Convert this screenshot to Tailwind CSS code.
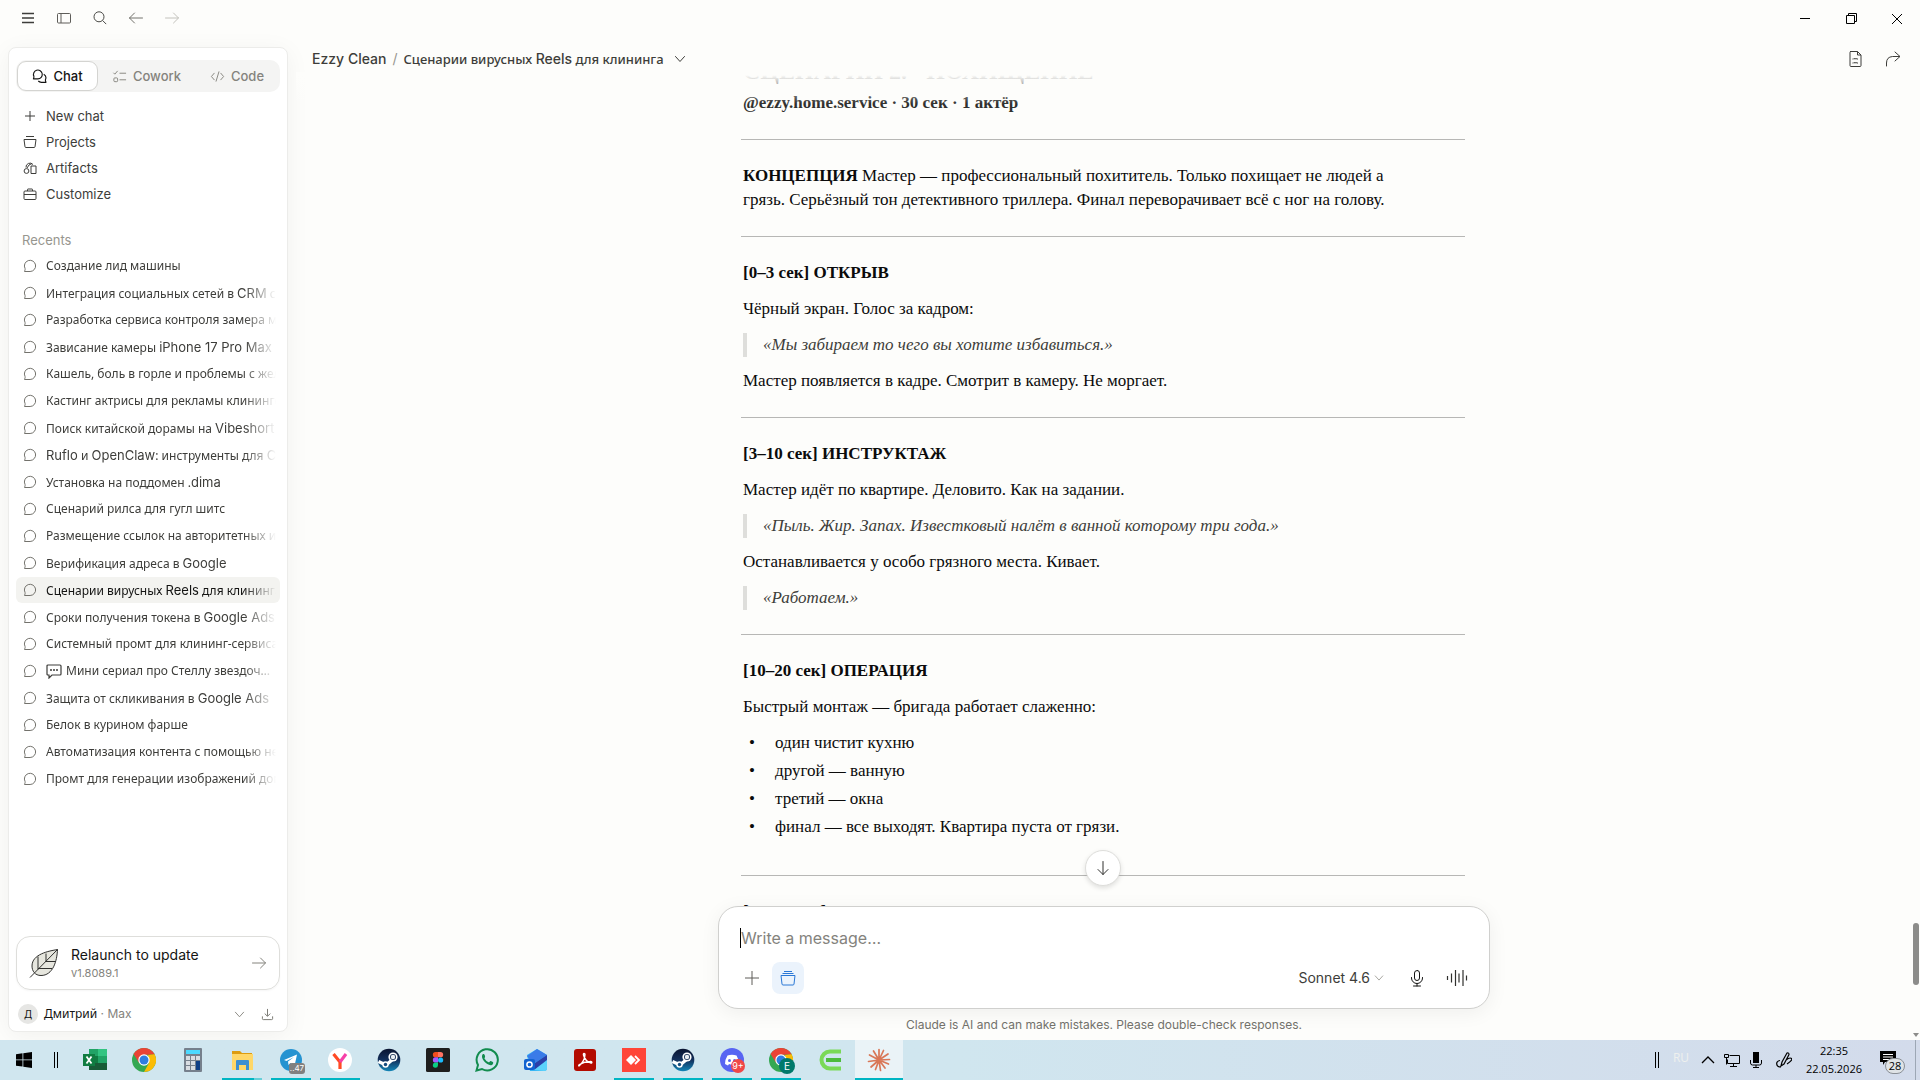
<!DOCTYPE html>
<html lang="ru">
<head>
  <meta charset="UTF-8">
  <meta name="viewport" content="width=device-width, initial-scale=1.0">
  <title>Claude</title>
  <script src="https://cdn.jsdelivr.net/npm/@tailwindcss/browser@4"></script>
</head>
<body class="h-screen flex flex-col overflow-hidden bg-[#fdfdfb] text-[#3d3d3a] font-['Inter','Noto_Sans',sans-serif] text-sm">
  <!-- Shared icons -->
  <svg class="absolute size-0">
    <symbol id="bubble" viewBox="0 0 14 14" fill="none" stroke="currentColor"><path d="M1.5 12.5h5.6A5.6 5.6 0 1 0 2 9.4c.3.7.2 1-.5 3.1z" stroke-linejoin="round"/></symbol>
    <symbol id="chevron" viewBox="0 0 12 12" fill="none" stroke="currentColor"><path d="M1.5 3.5 6 8.5l4.500-5" stroke-linecap="round"/></symbol>
    <symbol id="right" viewBox="0 0 16 16" fill="none" stroke="currentColor" stroke-linecap="round"><path d="M1.500 8h13M9.500 3l5 5-5 5"/></symbol>
    <symbol id="steam" viewBox="0 0 24 24">
      <circle cx="12" cy="12" r="11.300" fill="url(#steamFill)"/>
      <path d="M1.500 13.500 9 17l6-5" fill="none" stroke="#fff" stroke-width="3.200"/>
      <circle cx="8.500" cy="16.500" r="3.200" fill="#fff"/><circle cx="8.500" cy="16.500" r="1.700" fill="#134a7c"/>
      <circle cx="16" cy="9" r="4.600" fill="#fff"/><circle cx="16" cy="9" r="3" fill="#1b3357"/><circle cx="16" cy="9" r="2.200" fill="#e9eef3"/>
    </symbol>
    <symbol id="chrome" viewBox="0 0 24 24">
      <circle cx="12" cy="12" r="12" fill="#34a853"/>
      <path d="M1.600 6A12 12 0 0 1 22.400 6L12 7 7 14.800z" fill="#ea4335"/>
      <path d="M22.400 6A12 12 0 0 1 12 24l5-9-1-8z" fill="#fbbc05"/>
      <path d="M12 6.200h10.400V6L12 5z" fill="#ea4335"/>
      <circle cx="12" cy="12" r="5.700" fill="#fff"/><circle cx="12" cy="12" r="4.500" fill="#2f7de1"/>
    </symbol>
    <linearGradient id="steamFill" x1="0" y1="0" x2="0" y2="1"><stop offset="0" stop-color="#0a1430"/><stop offset="0.500" stop-color="#13305c"/><stop offset="1" stop-color="#1387b8"/></linearGradient>
  </svg>

  <div class="flex-1 min-h-0 flex">
    <!-- Left column -->
    <div class="w-[296px] shrink-0 flex flex-col pl-2 pr-2 pb-2">
      <div class="h-[47px] shrink-0 flex items-start pt-[10px] pl-3 gap-5">
        <button aria-label="Menu"><svg class="size-4" viewBox="0 0 16 16" fill="none" stroke="#3d3d3a" stroke-width="1.500"><path d="M2 3.500h12M2 8h12M2 12.500h12"/></svg></button>
        <button aria-label="Toggle sidebar"><svg class="size-4" viewBox="0 0 16 16" fill="none" stroke="#5e5d59"><rect x="1.500" y="3.500" width="13" height="9.500" rx="1"/><path d="M5 3.500V13"/></svg></button>
        <button aria-label="Search"><svg class="size-4" viewBox="0 0 16 16" fill="none" stroke="#4a4a46"><circle cx="7" cy="6.800" r="5"/><path d="m10.600 10.500 3.600 3.600"/></svg></button>
        <button aria-label="Back"><svg class="size-4 rotate-180 text-[#73726c]"><use href="#right"/></svg></button>
        <button aria-label="Forward"><svg class="size-4 text-[#c3c2bc]"><use href="#right"/></svg></button>
      </div>

      <aside class="flex-1 min-h-0 flex flex-col rounded-lg border border-[#ececea] bg-white px-[7px] shadow-[0_4px_24px_rgba(0,0,0,0.05)]">
        <!-- Mode tabs -->
        <div class="mt-3 h-8 shrink-0 flex items-center rounded-[10px] bg-[#f4f4f3] p-px text-[13px] font-medium text-[#84837d]">
          <button class="h-[30px] w-[81px] flex items-center justify-center gap-[6px] rounded-[9px] border border-[#d4d4d1] bg-white text-[#141413]">
            <svg class="size-[15px]" viewBox="0 0 16 16" fill="none" stroke="currentColor" stroke-width="1.200" stroke-linejoin="round"><path d="M1.500 10.500h4.800A4.700 4.700 0 1 0 2 7.800c.3.800.2 1-.5 2.700z"/><path d="M12.500 5.600a4.500 4.500 0 0 1 1.800 5.800c-.2.600 0 1.200.6 2.800H10a4.500 4.500 0 0 1-3.300-1.400"/></svg>
            Chat
          </button>
          <button class="flex-1 flex items-center justify-center gap-[6px]">
            <svg class="size-[15px]" viewBox="0 0 16 16" fill="none" stroke="currentColor"><path d="m1.500 4 1.500 1.500 3-3.500M8 4.500h7M8 11.500h7"/><rect x="2" y="9.500" width="4" height="4" rx="1"/></svg>
            Cowork
          </button>
          <button class="w-[84px] flex items-center justify-center gap-[6px]">
            <svg class="size-[15px]" viewBox="0 0 16 16" fill="none" stroke="currentColor" stroke-linecap="round"><path d="M4.500 4.500 1.500 8l3 3.500M11.500 4.500l3 3.500-3 3.500M9.500 3l-3 10"/></svg>
            Code
          </button>
        </div>

        <!-- Navigation -->
        <nav class="mt-[11px] flex flex-col text-[13px]">
          <a href="#" class="h-[26px] flex items-center gap-[9px] px-[7px]"><svg class="size-[14px]" viewBox="0 0 14 14" fill="none" stroke="currentColor"><path d="M7 2v10M2 7h10"/></svg>New chat</a>
          <a href="#" class="h-[26px] flex items-center gap-[9px] px-[7px]"><svg class="size-[14px]" viewBox="0 0 14 14" fill="none" stroke="currentColor"><path d="M3 1.500h8M1 4.500h12l-1 7.300q-.1.700-1 .7H3q-.900 0-1-.700z" stroke-linejoin="round"/></svg>Projects</a>
          <a href="#" class="h-[26px] flex items-center gap-[9px] px-[7px]"><svg class="size-[14px]" viewBox="0 0 14 14" fill="none" stroke="currentColor"><path d="M3 6.500a4 4 0 0 1 7-3M8 5h5v7.500H8zM4 7 6 4l3-1.500"/><circle cx="3.500" cy="10" r="2.400"/></svg>Artifacts</a>
          <a href="#" class="h-[26px] flex items-center gap-[9px] px-[7px]"><svg class="size-[14px]" viewBox="0 0 14 14" fill="none" stroke="currentColor"><rect x="1" y="4" width="12" height="8.500" rx="1"/><path d="M4.500 4V2.500q0-.5.5-.5h4q.5 0 .5.500V4M1 7.500h12"/></svg>Customize</a>
        </nav>

        <h2 class="mt-[23px] h-[20px] flex items-center px-[6px] text-[13px] text-[#97968f]">Recents</h2>
        <ul id="recents" class="mt-[3px] flex flex-col gap-px text-xs font-['Noto_Sans',sans-serif]"></ul>

        <!-- Update card -->
        <button class="mt-auto h-[54px] shrink-0 flex items-center rounded-[14px] border border-[#dededb] px-3 text-left shadow-[0_1px_2px_rgba(0,0,0,0.04)]">
          <svg class="size-[30px]" viewBox="0 0 30 30" fill="none" stroke="#30302e" stroke-linejoin="round"><path d="M28.500 1.500C20 3 3 6 3 18c0 5 3 9.500 9 9.500C24 27.500 28 13 28.500 1.500z" fill="#e6e6de"/><path d="M1 29.500 28.500 1.500M9 21.500V8.500M9 20.500h14M17 13.500V5.500M16.500 13.500h10"/></svg>
          <span class="ml-3 flex-1">
            <span class="block text-sm text-[#141413]">Relaunch to update</span>
            <span class="block text-[11px] leading-4 text-[#84837d]">v1.8089.1</span>
          </span>
          <svg class="size-4 text-[#84837d]"><use href="#right"/></svg>
        </button>

        <!-- Account -->
        <div class="h-[34px] mt-[7px] shrink-0 flex items-center px-[2px]">
          <span class="size-5 flex items-center justify-center rounded-full bg-[#e6e6e4] text-[10px] text-[#141413]">Д</span>
          <span class="ml-[6px] flex-1 text-xs text-[#84837d]"><span class="text-[#141413] font-['Noto_Sans',sans-serif]">Дмитрий</span> · Max</span>
          <button aria-label="Account menu" class="mr-4"><svg class="block size-[11px] text-[#84837d]"><use href="#chevron"/></svg></button>
          <button aria-label="Downloads" class="mr-1"><svg class="block size-[13px]" viewBox="0 0 14 14" fill="none" stroke="#73726c"><path d="M7 1v7.500M4 6l3 3 3-3M1.500 9v2.500q0 1 1 1h9q1 0 1-1V9"/></svg></button>
        </div>
      </aside>
    </div>

    <!-- Conversation -->
    <main class="flex-1 min-w-0 flex flex-col">
      <div class="h-[37px] shrink-0 -mr-2 flex justify-end">
        <button aria-label="Minimize" class="w-[46px] flex items-center justify-center"><svg class="size-[10px]" viewBox="0 0 10 10" stroke="#000"><path d="M0 4.500h10"/></svg></button>
        <button aria-label="Restore" class="w-[46px] flex items-center justify-center"><svg class="size-[11px]" viewBox="0 0 11 11" fill="none" stroke="#000"><path d="M.500 2.500h8v8h-8zM2.500 2.500v-2h8v8h-2"/></svg></button>
        <button aria-label="Close" class="w-[46px] flex items-center justify-center"><svg class="size-[10px]" viewBox="0 0 10 10" stroke="#000"><path d="m0 0 10 10M10 0 0 10"/></svg></button>
      </div>
      <header class="h-[35px] shrink-0 -mr-2 flex items-start pl-4 pr-[18px]">
        <h1 class="flex-1 flex items-center h-[44px] text-sm font-medium"><a href="#">Ezzy Clean</a><span class="mx-[6px] font-normal text-[#97968f]">/</span><button class="flex items-center gap-[10px] text-[13px] font-['Noto_Sans',sans-serif]"><span>Сценарии вирусных <span class="text-sm font-['Inter',sans-serif]">Reels</span> для клининга</span><svg class="size-3"><use href="#chevron"/></svg></button></h1>
        <button aria-label="Open document" class="h-[44px] mr-5 flex items-center"><svg class="size-[18px]" viewBox="0 0 18 18" fill="none" stroke="currentColor"><path d="M4 1.500h7.500l3.500 3.500v10.500q0 1-1 1H5q-1 0-1-1v-13q0-1 1-1M11.500 1.500V5H15M6.500 9h1l.500-.500 1 .500 1-.500 1 .500h1M6.500 13h1l.500-.500 1 .500 1-.500 1 .500h1"/></svg></button>
        <button aria-label="Share" class="h-[44px] flex items-center"><svg class="size-[18px]" viewBox="0 0 18 18" fill="none" stroke="currentColor"><path d="M2.500 16v-3q0-6 6-6.500h7M11 2l5 4.500-5 4.500" stroke-linecap="round"/></svg></button>
      </header>

      <div class="relative flex-1 min-h-0 mr-[2px] flex">
        <div class="flex-1 min-w-0 overflow-hidden">
          <article class="-mt-[17px] mx-auto max-w-[724px] flex flex-col font-['Liberation_Serif',serif] text-[17px] leading-6 text-[#0b0b0b]">
            <h2 class="px-[2px] mb-1 text-[24px] leading-8 font-bold">СЦЕНАРИЙ 2. "ПОХИЩЕНИЕ"</h2>
            <p class="px-[2px] font-bold text-[#30302e]">@ezzy.home.service · 30 сек · 1 актёр</p>
            <hr class="my-6 border-[#b7b7b5]">
            <p class="px-[2px]"><strong>КОНЦЕПЦИЯ</strong> Мастер — профессиональный похититель. Только похищает не людей а<br>грязь. Серьёзный тон детективного триллера. Финал переворачивает всё с ног на голову.</p>
            <hr class="my-6 border-[#b7b7b5]">
            <section class="px-[2px] flex flex-col gap-3">
              <h3 class="font-bold">[0–3 сек] ОТКРЫВ</h3>
              <p>Чёрный экран. Голос за кадром:</p>
              <blockquote class="border-l-4 border-[#dededb] pl-4 italic text-[#3d3d3a]">«Мы забираем то чего вы хотите избавиться.»</blockquote>
              <p>Мастер появляется в кадре. Смотрит в камеру. Не моргает.</p>
            </section>
            <hr class="my-6 border-[#b7b7b5]">
            <section class="px-[2px] flex flex-col gap-3">
              <h3 class="font-bold">[3–10 сек] ИНСТРУКТАЖ</h3>
              <p>Мастер идёт по квартире. Деловито. Как на задании.</p>
              <blockquote class="border-l-4 border-[#dededb] pl-4 italic text-[#3d3d3a]">«Пыль. Жир. Запах. Известковый налёт в ванной которому три года.»</blockquote>
              <p>Останавливается у особо грязного места. Кивает.</p>
              <blockquote class="border-l-4 border-[#dededb] pl-4 italic text-[#3d3d3a]">«Работаем.»</blockquote>
            </section>
            <hr class="my-6 border-[#b7b7b5]">
            <section class="px-[2px] pb-3 flex flex-col gap-3">
              <h3 class="font-bold">[10–20 сек] ОПЕРАЦИЯ</h3>
              <p>Быстрый монтаж — бригада работает слаженно:</p>
              <ul class="flex flex-col gap-1">
                <li class="flex before:content-['•'] before:w-8 before:pl-[6px]">один чистит кухню</li>
                <li class="flex before:content-['•'] before:w-8 before:pl-[6px]">другой — ванную</li>
                <li class="flex before:content-['•'] before:w-8 before:pl-[6px]">третий — окна</li>
                <li class="flex before:content-['•'] before:w-8 before:pl-[6px]">финал — все выходят. Квартира пуста от грязи.</li>
              </ul>
            </section>
            <hr class="my-6 border-[#b7b7b5]">
            <h3 class="px-[2px] font-bold">[20–27 сек] ФИНАЛ</h3>
          </article>
        </div>
        <div class="absolute inset-x-0 top-0 h-8 bg-linear-to-b from-[#fdfdfb] from-10% to-[#fdfdfb]/0"></div>
        <button aria-label="Scroll to bottom" class="absolute left-1/2 bottom-5 -translate-x-1/2 size-9 flex items-center justify-center rounded-full border border-[#dededb] bg-white shadow-[0_2px_5px_rgba(0,0,0,0.12)]"><svg class="size-4 rotate-90 text-[#30302e]"><use href="#right"/></svg></button>
      </div>

      <!-- Composer -->
      <form class="relative shrink-0 mx-auto w-full max-w-[772px] rounded-[20px] border border-[#d0d0ce] bg-white pt-[19px] pb-[14px] px-[21px] shadow-[0_4px_20px_rgba(0,0,0,0.06)]">
        <div class="flex items-center">
          <span class="w-px h-5 bg-black"></span>
          <input type="text" aria-label="Message" placeholder="Write a message…" class="flex-1 h-6 text-base outline-none placeholder:text-[#84837d]">
        </div>
        <div class="mt-3 h-8 flex items-center">
          <button type="button" aria-label="Add" class="w-8 flex items-center pl-1"><svg class="size-4" viewBox="0 0 16 16" stroke="#5e5d59"><path d="M8 1v14M1 8h14"/></svg></button>
          <button type="button" aria-label="Project" class="size-8 flex items-center justify-center rounded-lg bg-[#ebf3fc]"><svg class="size-4" viewBox="0 0 16 16" fill="none" stroke="#2a78d6" stroke-linejoin="round"><path d="M4 1.500h8M2.500 3.500h11M1 5.500h14l-1 8.500q-.1 1-1 1H3q-.900 0-1-1z"/></svg></button>
          <button type="button" class="ml-auto flex items-center gap-1 text-sm">Sonnet 4.6<svg class="size-[10px] text-[#97968f]"><use href="#chevron"/></svg></button>
          <button type="button" aria-label="Dictate" class="ml-6"><svg class="block size-[18px]" viewBox="0 0 18 18" fill="none" stroke="#141413" stroke-linecap="round"><rect x="6.500" y="1.500" width="5" height="10" rx="2.500"/><path d="M3.500 8.500v.500a5.500 5.500 0 0 0 11 0v-.500M9 14.500v2.500M5.500 17h7"/></svg></button>
          <button type="button" aria-label="Voice mode" class="ml-5"><svg class="block w-[22px] h-[18px]" viewBox="0 0 22 18" stroke="#30302e" stroke-width="1.200"><path d="M1.500 7v4M5.500 4.500v9M9.500 1v16M13 4.500v9M17 1v16M20.500 6.500v5"/></svg></button>
        </div>
      </form>
      <p class="h-[31px] shrink-0 flex items-center justify-center text-xs text-[#73726c]">Claude is AI and can make mistakes. Please double-check responses.</p>
    </main>

    <!-- Scroll track -->
    <div class="w-2 shrink-0 flex flex-col items-center justify-end pb-[3px]">
      <div class="w-[6px] h-[62px] rounded-full bg-[#8c8c8a] mb-[48px]"></div>
      <svg class="w-[6px] h-1" viewBox="0 0 6 4" fill="#8c8c8a"><path d="M0 0h6L3 4z"/></svg>
    </div>
  </div>

  <!-- Taskbar -->
  <footer class="h-10 shrink-0 flex bg-linear-to-r from-[#d0e6ef] from-50% to-[#d3dbeb] text-black">
    <button aria-label="Start" class="w-12 flex items-center justify-center"><svg class="size-4" viewBox="0 0 16 16"><path d="M0 2.200 6.500 1.300v6.200H0zM7.300 1.200 16 0v7.500H7.300zM0 8.300h6.500v6.300L0 13.700zM7.300 8.300H16V16l-8.700-1.200z"/></svg></button>
    <div class="w-[23px] flex items-center justify-center gap-[2px] pr-2"><span class="w-px h-4 bg-black"></span><span class="w-px h-4 bg-black"></span></div>
    <div class="flex gap-px">
      <button aria-label="Excel" class="w-12 flex items-center justify-center"><svg class="size-6" viewBox="0 0 24 24"><path d="M6 1h9v7H6z" fill="#21a366"/><path d="M15 1h9v7h-9z" fill="#33c481"/><path d="M6 8h9v7H6z" fill="#107c41"/><path d="M15 8h9v7h-9z" fill="#21a366"/><path d="M6 15h18v7H6z" fill="#185c37"/><path d="M0 6h12v12H0z" fill="#107c41"/><path d="m3.500 8.500 5 7M8.500 8.500l-5 7" stroke="#fff" stroke-width="1.800"/></svg></button>
      <button aria-label="Chrome" class="w-12 flex items-center justify-center"><svg class="size-6"><use href="#chrome"/></svg></button>
      <button aria-label="Calculator" class="w-12 flex items-center justify-center"><svg class="size-6" viewBox="0 0 24 24"><rect x="3" width="18" height="24" rx="1" fill="#76808c"/><path d="M5 2h14v4H5z" fill="#4cd9ff"/><path d="M5 8h4v4H5zm5 0h4v4h-4zm5 0h4v4h-4zM5 13h4v4H5zm5 0h4v4h-4zM5 18h4v4H5zm5 0h4v4h-4z" fill="#d9dde2"/><path d="M15 13h4v9h-4z" fill="#0f3f86"/></svg></button>
      <button aria-label="Explorer" class="relative w-12 flex items-center justify-center"><svg class="size-6" viewBox="0 0 24 24"><path d="M2 3h8l2 2h10v6H2z" fill="#dd9c10"/><path d="M2 6h21v16H2z" fill="#ffd768"/><path d="M6 13q0-1 1-1h11q1 0 1 1v9h-3v-5H9v5H6z" fill="#3d8fd1"/></svg><span class="absolute left-1 bottom-0 h-[2px] w-8 bg-[#00b5c3]"></span><span class="absolute right-1 bottom-0 h-[2px] w-2 bg-[#66cfd8]"></span></button>
      <button aria-label="Telegram" class="relative w-12 flex items-center justify-center"><svg class="size-6" viewBox="0 0 24 24"><circle cx="12" cy="12" r="11" fill="#2593d1"/><path d="m5 12 13-5.500-2.500 11.500-4-3-2 2-.500-3.500L15 9l-7.500 4z" fill="#fff"/></svg><span class="absolute left-[22px] top-[23px] w-4 h-[11px] flex items-center justify-center rounded-[3px] bg-[#808080] text-[8px] text-white">..47</span><span class="absolute inset-x-1 bottom-0 h-[2px] bg-[#00b5c3]"></span></button>
      <button aria-label="Yandex" class="relative w-12 flex items-center justify-center"><svg class="size-6" viewBox="0 0 24 24"><circle cx="12" cy="12" r="12" fill="#fff"/><path d="m5.500 6 6.500 8V21" fill="none" stroke="#ff4a24" stroke-width="3.200"/><path d="m12 14 6-8" stroke="#f640a8" stroke-width="3.200"/></svg><span class="absolute inset-x-1 bottom-0 h-[2px] bg-[#00b5c3]"></span></button>
      <button aria-label="Steam" class="w-12 flex items-center justify-center"><svg class="size-6"><use href="#steam"/></svg></button>
      <button aria-label="Figma" class="w-12 flex items-center justify-center"><svg class="size-6" viewBox="0 0 24 24"><rect width="24" height="24" rx="1.500" fill="#1e1e1e"/><path d="M12 4H9.500a2.600 2.600 0 0 0 0 5.300H12z" fill="#f24e1e"/><path d="M12 4h2.500a2.600 2.600 0 0 1 0 5.300H12z" fill="#ff7262"/><path d="M12 9.300H9.500a2.600 2.600 0 0 0 0 5.300H12z" fill="#a259ff"/><circle cx="14.600" cy="12" r="2.600" fill="#1abcfe"/><path d="M12 14.600H9.500a2.600 2.600 0 1 0 2.500 2.700z" fill="#0acf83"/></svg></button>
      <button aria-label="WhatsApp" class="w-12 flex items-center justify-center"><svg class="size-6" viewBox="0 0 24 24"><path d="m1.500 22.500 1.500-5.500a10.600 10.600 0 1 1 4 4z" fill="none" stroke="#128c4f" stroke-width="2"/><path d="M7.500 6.500c1-1 2-.500 2.500 1.500s-1 1.700-.500 2.500q1.500 2.700 4 3.800c1 .400 1.300-1.700 2.300-1.300l2 1c1 .5.200 2.500-1 3-4 1.500-12-6.500-9.300-10.500z" fill="#128c4f"/></svg></button>
      <button aria-label="Outlook" class="w-12 flex items-center justify-center"><svg class="size-6" viewBox="0 0 24 24"><path d="M3 7 13 1l10 6v13q0 3-3 3H6z" fill="#35b5f5"/><path d="M3 8 13 1l10 6-14 9z" fill="#3a7be8"/><path d="M8 17 23 7v6L11 22z" fill="#2b3fa8"/><path d="M10 22 23 12v8q0 3-3 3z" fill="#5cd3fb"/><rect y="11" width="11" height="11" rx="2" fill="#1263d0"/><circle cx="5.500" cy="16.500" r="2.600" fill="none" stroke="#fff" stroke-width="1.500"/></svg></button>
      <button aria-label="Acrobat" class="w-12 flex items-center justify-center"><svg class="size-6" viewBox="0 0 24 24"><rect x="1" y="1" width="22" height="22" rx="3" fill="#b30b00"/><path d="M6 18c3-2 6-7 6-11.500 0-1.500-2-1.500-1.500.500 1 4 4 7 7.500 8 1.500 0 1-1.800-1-1.500-4 0-8 1.500-10.500 3-.8.600-1 1.500-.5 1.500z" fill="none" stroke="#fff" stroke-width="1.400"/></svg></button>
      <button aria-label="AnyDesk" class="relative w-12 flex items-center justify-center"><svg class="size-6" viewBox="0 0 24 24"><path d="M0 0h24v24H0z" fill="#ff4538"/><path d="m9 7 5 5-5 5-5-5z" fill="#fff"/><path d="m13 8 4 4-4 4" fill="none" stroke="#fff" stroke-width="1.800"/></svg><span class="absolute inset-x-1 bottom-0 h-[2px] bg-[#00b5c3]"></span></button>
      <button aria-label="Steam library" class="relative w-12 flex items-center justify-center"><svg class="size-6"><use href="#steam"/></svg><span class="absolute inset-x-1 bottom-0 h-[2px] bg-[#00b5c3]"></span></button>
      <button aria-label="Discord" class="relative w-12 flex items-center justify-center"><svg class="size-6" viewBox="0 0 24 24"><circle cx="12" cy="12" r="12" fill="#5865f2"/><path d="M7.500 7.500q4.500-1.500 9 0 2.500 4 2.500 8.500l-3 1.500-1-1.500q-3 1-6 0l-1 1.500L5 16q0-4.500 2.500-8.500z" fill="#fff"/><circle cx="9.500" cy="12.500" r="1.500" fill="#5865f2"/><circle cx="14.500" cy="12.500" r="1.500" fill="#5865f2"/></svg><span class="absolute left-[23px] top-[19px] size-[14px] flex items-center justify-center rounded-full bg-[#f04747] text-[9px] text-white">9+</span><span class="absolute inset-x-1 bottom-0 h-[2px] bg-[#00b5c3]"></span></button>
      <button aria-label="Chrome profile" class="relative w-12 flex items-center justify-center"><svg class="size-6"><use href="#chrome"/></svg><span class="absolute left-[22px] top-[18px] size-4 flex items-center justify-center rounded-full bg-[#00796b] text-[10px] text-white">E</span><span class="absolute inset-x-1 bottom-0 h-[2px] bg-[#00b5c3]"></span></button>
      <button aria-label="Camtasia" class="w-12 flex items-center justify-center"><svg class="size-6" viewBox="0 0 24 24" fill="none" stroke="#7ad957" stroke-width="4"><path d="M23 3.500H12a8.500 8.500 0 0 0 0 17h11" /><path d="M8 12h15" stroke="#4dbb3c"/></svg></button>
      <button aria-label="Claude" class="relative w-12 flex items-center justify-center bg-[#eaf3f7]"><svg class="size-6" viewBox="0 0 24 24" stroke="#d97757" stroke-width="1.700" stroke-linecap="round"><path d="M12 12V1.500M12 12l4.500-9.500M12 12l9-6M12 12l10.500-.5M12 12l9.500 4M12 12l6 8M12 12l1.500 10.500M12 12 8.500 21.500M12 12l-8 7M12 12 1.500 13.500M12 12 2.500 7M12 12 6.500 3"/></svg><span class="absolute inset-x-0 bottom-0 h-[2px] bg-[#00b5c3]"></span></button>
    </div>

    <!-- Tray -->
    <div class="ml-auto flex items-center font-['Open_Sans',sans-serif]">
      <div class="flex gap-[2px]"><span class="w-px h-4 bg-black"></span><span class="w-px h-4 bg-black"></span></div>
      <span class="ml-[14px] w-4 text-xs leading-4 pb-1 text-[#eef0ee]">RU</span>
      <svg class="ml-3 size-[14px]" viewBox="0 0 14 14" fill="none" stroke="#000" stroke-width="1.300"><path d="m1 10 6-6 6 6"/></svg>
      <svg class="ml-[9px] size-4" viewBox="0 0 16 16" fill="none" stroke="#000"><path d="M5.500 3.500h10v8h-12v-4M9.500 11.500v3M6 14.500h7M.500 2.500h4v3h-4zM2.500 5.500v7"/></svg>
      <svg class="ml-2 size-4" viewBox="0 0 16 16"><path d="M5 0h6v11H5z"/><path d="M2.500 8v3q0 2 2 2h7q2 0 2-2V8M8 13v3M5 15.500h6" fill="none" stroke="#000"/></svg>
      <svg class="ml-3 size-4" viewBox="0 0 16 16" fill="none" stroke="#000" stroke-width="1.200"><path d="M5 15q-4 0-4.300-3T4 8.500M5 14l1-4 5-9q2-.5 2 1.500L8 12zM10 8q4-3 5.500-1.500T11 12"/></svg>
      <div class="ml-[14px] text-center text-[11px] leading-[18px]">22:35<br>22.05.2026</div>
      <div class="relative ml-[18px] mr-[19px] -mt-1">
        <svg class="size-4" viewBox="0 0 16 16"><path d="M0 1h16v11H5l-2 3v-3H0z"/><path d="M3 4.500h10M3 7h10M3 9.500h7" stroke="#fff"/></svg>
        <span class="absolute left-[5px] top-2 w-5 h-4 flex items-center justify-center rounded-full border border-[#8a8f96] bg-[#dfe3e6] text-[11px]">28</span>
      </div>
      <div class="w-[5px] h-10 border-l border-[#9da7b5]"></div>
    </div>
  </footer>

  <script>
    const recents = [
      'Создание лид машины',
      'Интеграция социальных сетей в CRM системы',
      'Разработка сервиса контроля замера мебели',
      'Зависание камеры iPhone 17 Pro Max при',
      'Кашель, боль в горле и проблемы с желудком',
      'Кастинг актрисы для рекламы клинингового',
      'Поиск китайской дорамы на Vibeshort',
      'Ruflo и OpenClaw: инструменты для Claude',
      'Установка на поддомен .dima',
      'Сценарий рилса для гугл шитс',
      'Размещение ссылок на авторитетных источниках',
      'Верификация адреса в Google',
      'Сценарии вирусных Reels для клининга',
      'Сроки получения токена в Google Ads',
      'Системный промт для клининг-сервиса',
      'Мини сериал про Стеллу звездоч…',
      'Защита от скликивания в Google Ads',
      'Белок в курином фарше',
      'Автоматизация контента с помощью нейросетей',
      'Промт для генерации изображений домов',
    ];
    const active = 12;
    const withBubble = 15;
    const speech = '<svg class="inline size-4 mr-1 -mt-px" viewBox="0 0 16 16" fill="none" stroke="currentColor" stroke-width="1.200"><path d="M2 2h12q1 0 1 1v8q0 1-1 1H6l-3 3v-3H2q-1 0-1-1V3q0-1 1-1z"/><path d="M4 7h2M7 7h2M10 7h2" stroke-width="1.500"/></svg>';

    // Latin words keep the interface font
    const latin = text => text.replace(/[A-Za-z][A-Za-z0-9 ]*[A-Za-z]/g, m => `<span class="text-[13px] font-['Inter',sans-serif]">${m}</span>`);

    document.getElementById('recents').innerHTML = recents.map((title, i) => `
      <li class="h-[26px] flex rounded-md ${i === active ? 'bg-[#f3f3f0] text-[#141413]' : ''}">
        <a href="#" class="flex-1 min-w-0 flex items-center gap-[9px] pl-[7px] pr-1">
          <svg class="size-[14px] shrink-0 text-[#73726c]"><use href="#bubble"/></svg>
          <span class="flex-1 overflow-hidden whitespace-nowrap leading-5 [mask-image:linear-gradient(to_right,black_86%,transparent)]">${i === withBubble ? speech : ''}${latin(title)}</span>
        </a>
      </li>`).join('');
  </script>
</body>
</html>
